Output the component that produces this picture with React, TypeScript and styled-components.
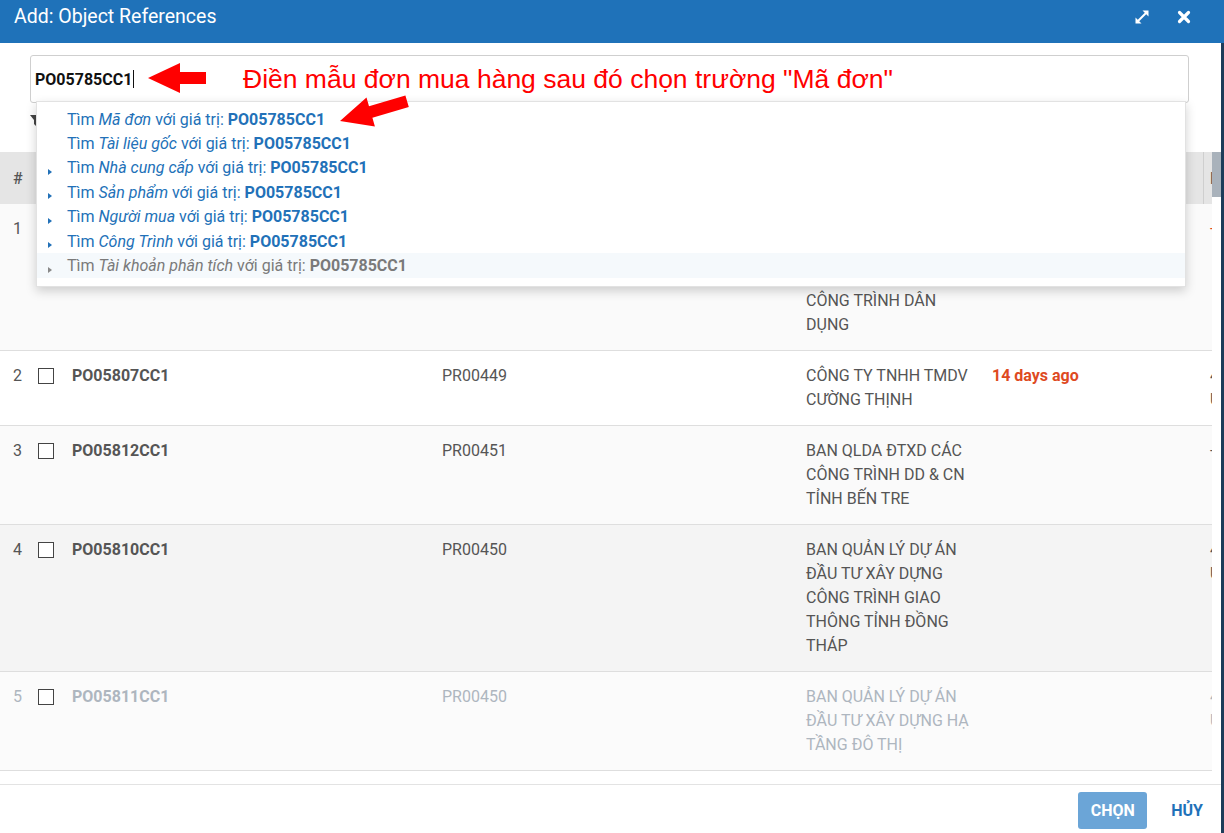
import React from "react";
import styled, { createGlobalStyle } from "styled-components";

const GlobalStyle = createGlobalStyle`
  html, body { margin: 0; padding: 0; background: #1d3c59; }
  body { font-family: Roboto, "Noto Sans", "Liberation Sans", sans-serif; }
  * { box-sizing: border-box; }
`;

const Modal = styled.div`
  width: 1224px;
  height: 833px;
  display: flex;
  flex-direction: column;
  overflow: hidden;
`;

const Header = styled.div`
  height: 43px;
  background: #1f72b9;
  display: flex;
  align-items: flex-start;
  padding: 5px 0 0 14px;
  color: #fff;
`;

const Title = styled.div`
  flex: 1;
  font-size: 19.5px;
  line-height: 24px;
  font-weight: 400;
`;

const HeaderIcons = styled.div`
  display: flex;
  align-items: center;
  gap: 26px;
  padding: 4px 32px 0 0;
`;

const IconBtn = styled.span`
  display: inline-flex;
  width: 16px;
  height: 16px;
  align-items: center;
  justify-content: center;
`;

const Body = styled.div`
  flex: 1;
  display: flex;
  min-height: 0;
`;

const Main = styled.div`
  width: 1221px;
  background: #fff;
  display: flex;
  flex-direction: column;
`;

const Gutter = styled.div`
  flex: 1;
  background: #1d3c59;
`;

const SearchArea = styled.div`
  position: relative;
  height: 109px;
  padding: 12px 32px 0 30px;
`;

const SearchInput = styled.div`
  height: 48px;
  border: 1px solid #cfcfcf;
  border-radius: 3px;
  display: flex;
  align-items: center;
  padding-left: 4px;
  font-size: 16px;
  font-weight: 700;
  color: #111;
`;

const Caret = styled.span`
  display: inline-block;
  width: 1px;
  height: 18px;
  background: #111;
  margin-left: 1px;
`;

const Toolbar = styled.div`
  height: 49px;
  padding: 8px 0 0 0;
`;

const Dropdown = styled.div`
  position: absolute;
  left: 36px;
  top: 58px;
  width: 1150px;
  background: #fff;
  border: 1px solid #e2e2e2;
  box-shadow: 0 4px 10px rgba(0, 0, 0, 0.18);
  padding: 5px 0 8px 0;
  z-index: 5;
`;

const Item = styled.div<{ $muted?: boolean }>`
  display: flex;
  align-items: center;
  height: 24.4px;
  padding-left: 11px;
  font-size: 16px;
  color: ${(p) => (p.$muted ? "#7a7a7a" : "#2271b8")};
  background: ${(p) => (p.$muted ? "#f5f9fc" : "transparent")};
  white-space: nowrap;
  i { font-style: italic; }
  b { font-weight: 700; }
`;

const Marker = styled.span<{ $show?: boolean; $muted?: boolean }>`
  width: 19px;
  height: 24px;
  display: inline-flex;
  align-items: flex-end;
  padding-bottom: 5px;
  &::before {
    content: "";
    display: ${(p) => (p.$show ? "block" : "none")};
    width: 0;
    height: 0;
    border-left: 4px solid ${(p) => (p.$muted ? "#888" : "#2271b8")};
    border-top: 3.5px solid transparent;
    border-bottom: 3.5px solid transparent;
  }
`;

const Note = styled.div`
  position: absolute;
  left: 243px;
  top: 20px;
  font-family: "Liberation Sans", Arial, sans-serif;
  font-size: 26.5px;
  line-height: 32px;
  color: #ff0000;
  white-space: nowrap;
  z-index: 10;
`;

const ArrowSvg = styled.svg<{ $left: number; $top: number }>`
  position: absolute;
  left: ${(p) => p.$left}px;
  top: ${(p) => p.$top}px;
  z-index: 10;
  overflow: visible;
`;

const TableArea = styled.div`
  flex: 1;
  min-height: 0;
  display: flex;
`;

const Viewport = styled.div`
  flex: 1;
  overflow: hidden;
  position: relative;
`;

const ScrollTrack = styled.div`
  width: 9px;
  background: #fff;
`;

const Thumb = styled.div`
  height: 45px;
  background: #a9b2bb;
`;

const cols = "38px 34px 370px 364px 186px 211px 200px";

const HeadRow = styled.div`
  display: grid;
  grid-template-columns: ${cols};
  width: 1403px;
  height: 52px;
  background: #e5e5e5;
  align-items: center;
  font-size: 16px;
  color: #555;
  font-weight: 500;
`;

const HeadCell = styled.div<{ $divider?: boolean }>`
  height: 100%;
  display: flex;
  align-items: center;
  padding-left: ${(p) => (p.$divider ? "6px" : "13px")};
  border-left: ${(p) => (p.$divider ? "1px solid #cfcfcf" : "none")};
  white-space: nowrap;
`;

const Row = styled.div<{ $bg: string; $muted?: boolean }>`
  display: grid;
  grid-template-columns: ${cols};
  width: 1403px;
  background: ${(p) => p.$bg};
  border-bottom: 1px solid #dedede;
  padding: 13px 0;
  font-size: 16px;
  line-height: 24px;
  color: ${(p) => (p.$muted ? "#aeb6bf" : "#555")};
`;

const Cell = styled.div<{ $pl?: number; $bold?: boolean; $red?: boolean }>`
  padding-left: ${(p) => p.$pl ?? 0}px;
  font-weight: ${(p) => (p.$bold ? 700 : 400)};
  color: ${(p) => (p.$red ? "#de4a1f" : "inherit")};
  white-space: nowrap;
`;

const Line = styled.span`
  display: block;
`;

const Check = styled.span`
  display: block;
  width: 16px;
  height: 16px;
  border: 1px solid #444;
  background: #fff;
  margin-top: 4px;
`;

const Footer = styled.div`
  height: 49px;
  border-top: 1px solid #e3e3e3;
  display: flex;
  justify-content: flex-end;
  align-items: center;
  gap: 24px;
  padding: 3px 18px 0 0;
`;

const PrimaryBtn = styled.button`
  width: 69px;
  height: 37px;
  border: none;
  border-radius: 3px;
  background: #6ba5d7;
  color: #fff;
  font-family: Roboto, sans-serif;
  font-size: 16px;
  font-weight: 700;
  padding: 0;
`;

const FlatBtn = styled.button`
  border: none;
  background: none;
  color: #1f72b9;
  font-family: Roboto, sans-serif;
  font-size: 16px;
  font-weight: 700;
  padding: 0;
`;

type RowData = {
  n: number;
  po: string;
  pr: string;
  name: string[];
  date?: string;
  last: string[];
  bg: string;
  muted?: boolean;
  redLast?: boolean;
};

const rows: RowData[] = [
  {
    n: 1,
    po: "PO05785CC1",
    pr: "PR00448",
    name: ["BAN QUẢN LÝ DỰ ÁN", "ĐẦU TƯ XÂY DỰNG", "CÁC", "CÔNG TRÌNH DÂN", "DỤNG"],
    last: ["-"],
    bg: "#fafafa",
    redLast: true,
  },
  {
    n: 2,
    po: "PO05807CC1",
    pr: "PR00449",
    name: ["CÔNG TY TNHH TMDV", "CƯỜNG THỊNH"],
    date: "14 days ago",
    last: ["4/11/2023", "Unknown"],
    bg: "#ffffff",
  },
  {
    n: 3,
    po: "PO05812CC1",
    pr: "PR00451",
    name: ["BAN QLDA ĐTXD CÁC", "CÔNG TRÌNH DD & CN", "TỈNH BẾN TRE"],
    last: ["-"],
    bg: "#fafafa",
  },
  {
    n: 4,
    po: "PO05810CC1",
    pr: "PR00450",
    name: ["BAN QUẢN LÝ DỰ ÁN", "ĐẦU TƯ XÂY DỰNG", "CÔNG TRÌNH GIAO", "THÔNG TỈNH ĐỒNG", "THÁP"],
    last: ["4/11/2023", "Unknown"],
    bg: "#f4f4f4",
  },
  {
    n: 5,
    po: "PO05811CC1",
    pr: "PR00450",
    name: ["BAN QUẢN LÝ DỰ ÁN", "ĐẦU TƯ XÂY DỰNG HẠ", "TẦNG ĐÔ THỊ"],
    last: ["4/11/2023", "Unknown"],
    bg: "#fbfbfb",
    muted: true,
  },
];

const suggestions: { field: string; arrow: boolean; muted?: boolean }[] = [
  { field: "Mã đơn", arrow: false },
  { field: "Tài liệu gốc", arrow: false },
  { field: "Nhà cung cấp", arrow: true },
  { field: "Sản phẩm", arrow: true },
  { field: "Người mua", arrow: true },
  { field: "Công Trình", arrow: true },
  { field: "Tài khoản phân tích", arrow: true, muted: true },
];

export default function App() {
  return (
    <>
      <GlobalStyle />
      <Modal>
        <Header>
          <Title>Add: Object References</Title>
          <HeaderIcons>
            <IconBtn>
              <svg width="16" height="16" viewBox="0 0 16 16">
                <path d="M4 12 L12 4" stroke="#fff" strokeWidth="2" />
                <polygon points="8.5,1.5 14.5,1.5 14.5,7.5" fill="#fff" />
                <polygon points="1.5,8.5 1.5,14.5 7.5,14.5" fill="#fff" />
              </svg>
            </IconBtn>
            <IconBtn>
              <svg width="14" height="14" viewBox="0 0 14 14">
                <path
                  d="M2.5 2.5 L11.5 11.5 M11.5 2.5 L2.5 11.5"
                  stroke="#fff"
                  strokeWidth="3.2"
                  strokeLinecap="round"
                />
              </svg>
            </IconBtn>
          </HeaderIcons>
        </Header>
        <Body>
          <Main>
            <SearchArea>
              <SearchInput>
                PO05785CC1
                <Caret />
              </SearchInput>
              <Toolbar>
                <svg width="10" height="11" viewBox="0 0 10 11">
                  <polygon points="0,0 10,0 6,5 6,11 4,9 4,5" fill="#444" />
                </svg>
              </Toolbar>
              <Dropdown>
                {suggestions.map((s) => (
                  <Item key={s.field} $muted={s.muted}>
                    <Marker $show={s.arrow} $muted={s.muted} />
                    Tìm&nbsp;<i>{s.field}</i>&nbsp;với giá trị:&nbsp;<b>PO05785CC1</b>
                  </Item>
                ))}
              </Dropdown>
              <ArrowSvg $left={146} $top={19} width="62" height="32" viewBox="0 0 62 32">
                <polygon points="2,16 34,1 34,10 60,10 60,22 34,22 34,31" fill="#ff0000" />
              </ArrowSvg>
              <Note>Điền mẫu đơn mua hàng sau đó chọn trường "Mã đơn"</Note>
              <ArrowSvg $left={334} $top={45} width="85" height="45" viewBox="0 0 85 45">
                <polygon
                  points="6,33 32.5,9.6 35,18.2 71.4,7.5 74.8,19 38.4,29.7 40.9,38.4"
                  fill="#ff0000"
                />
              </ArrowSvg>
            </SearchArea>
            <TableArea>
              <Viewport>
                <HeadRow>
                  <HeadCell>#</HeadCell>
                  <HeadCell />
                  <HeadCell />
                  <HeadCell />
                  <HeadCell />
                  <HeadCell />
                  <HeadCell $divider>Ngày</HeadCell>
                </HeadRow>
                {rows.map((r) => (
                  <Row key={r.n} $bg={r.bg} $muted={r.muted}>
                    <Cell $pl={13}>{r.n}</Cell>
                    <Cell>
                      <Check />
                    </Cell>
                    <Cell $bold>{r.po}</Cell>
                    <Cell>{r.pr}</Cell>
                    <Cell>
                      {r.name.map((l, i) => (
                        <Line key={i}>{l}</Line>
                      ))}
                    </Cell>
                    <Cell $bold $red>
                      {r.date}
                    </Cell>
                    <Cell $pl={7} $red={r.redLast}>
                      {r.last.map((l, i) => (
                        <Line key={i}>{l}</Line>
                      ))}
                    </Cell>
                  </Row>
                ))}
              </Viewport>
              <ScrollTrack>
                <Thumb />
              </ScrollTrack>
            </TableArea>
            <Footer>
              <PrimaryBtn>CHỌN</PrimaryBtn>
              <FlatBtn>HỦY</FlatBtn>
            </Footer>
          </Main>
          <Gutter />
        </Body>
      </Modal>
    </>
  );
}
